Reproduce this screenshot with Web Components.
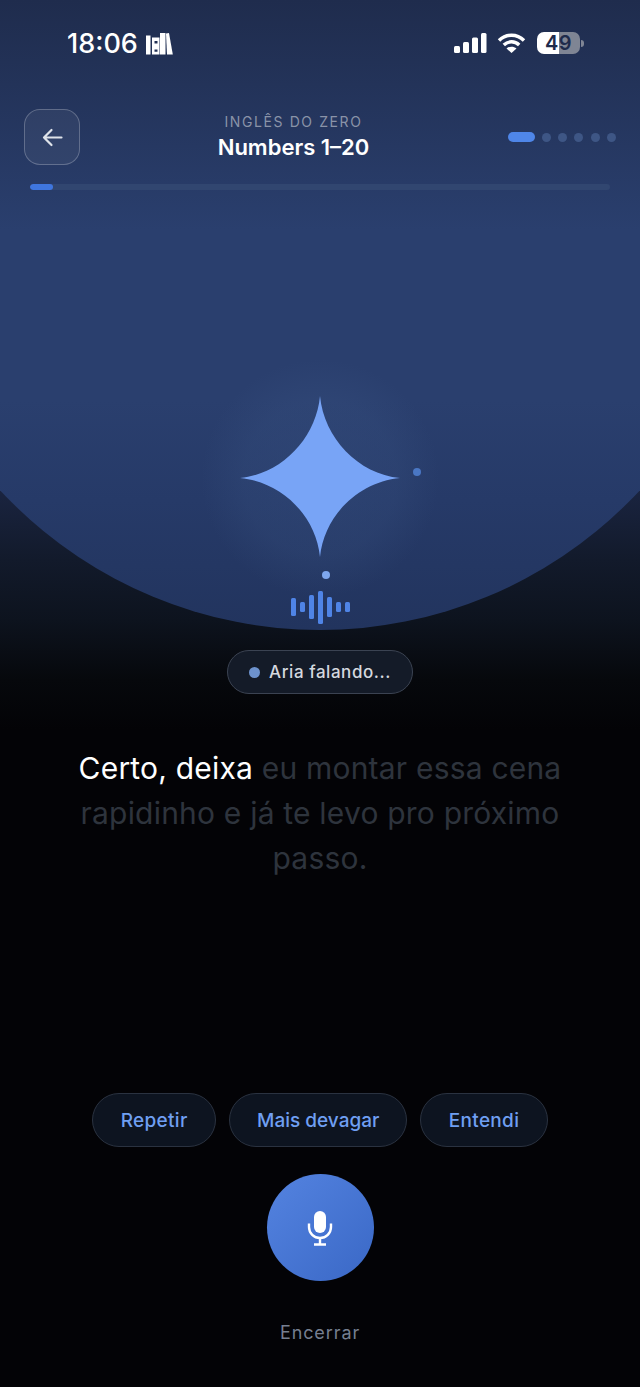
<!DOCTYPE html>
<html lang="pt">
<head>
<meta charset="utf-8">
<title>Aria</title>
<style>
  html, body { margin: 0; padding: 0; background: #030306; }
  body { font-family: "Inter", "Liberation Sans", sans-serif; }
</style>
</head>
<body>
<lesson-screen>
  <status-bar slot="top"></status-bar>
  <lesson-header slot="top" course="INGLÊS DO ZERO" title="Numbers 1–20"></lesson-header>
  <aria-orb slot="orb"></aria-orb>
  <speech-chip slot="orb">Aria falando...</speech-chip>
  <caption-text slot="caption"><b>Certo, deixa</b> eu montar essa cena rapidinho e já te levo pro próximo passo.</caption-text>
  <quick-reply slot="replies" style="letter-spacing:.3px">Repetir</quick-reply>
  <quick-reply slot="replies" style="padding:0 27px">Mais devagar</quick-reply>
  <quick-reply slot="replies" style="letter-spacing:.3px">Entendi</quick-reply>
  <mic-button slot="mic"></mic-button>
  <end-link slot="mic">Encerrar</end-link>
</lesson-screen>

<script>
class LessonScreen extends HTMLElement {
  connectedCallback() {
    this.attachShadow({ mode: 'open' });
    this.shadowRoot.innerHTML = `
      <style>
        :host {
          display: flex;
          flex-direction: column;
          position: relative;
          width: 640px;
          height: 1387px;
          overflow: hidden;
          background: linear-gradient(180deg, #1c2a4b 0, #1c2a4b 430px, #1a2440 490px, #121a2b 560px, #0d131e 620px, #06080c 680px, #030306 730px);
        }
        .dome {
          position: absolute;
          left: 0; top: 0;
          width: 640px;
          height: 640px;
          background: linear-gradient(180deg, #1f2c4d 0, #2a3f6e 230px, #2a3f6e 400px, #263a68 500px, #22345e 630px);
          clip-path: circle(436px at 320px 194px);
        }
        .glow {
          position: absolute;
          left: 200px; top: 358px;
          width: 240px; height: 240px;
          border-radius: 50%;
          background: radial-gradient(circle, rgba(70,100,150,.2) 0, rgba(70,100,150,.15) 45%, rgba(70,100,150,0) 70%);
        }
        .top, .orb, .caption, .replies, .mic { position: relative; }
        .top { display: block; }
        .orb {
          display: flex;
          flex-direction: column;
          align-items: center;
          margin-top: 206px;
        }
        .caption { margin-top: 52px; }
        .replies {
          display: flex;
          justify-content: center;
          gap: 13px;
          margin-top: 212px;
        }
        .mic {
          display: flex;
          flex-direction: column;
          align-items: center;
          margin-top: 27px;
        }
      </style>
      <div class="dome"></div>
      <div class="glow"></div>
      <div class="top"><slot name="top"></slot></div>
      <div class="orb"><slot name="orb"></slot></div>
      <div class="caption"><slot name="caption"></slot></div>
      <div class="replies"><slot name="replies"></slot></div>
      <div class="mic"><slot name="mic"></slot></div>
    `;
  }
}

class StatusBar extends HTMLElement {
  connectedCallback() {
    this.attachShadow({ mode: 'open' });
    this.shadowRoot.innerHTML = `
      <style>
        :host {
          display: flex;
          justify-content: space-between;
          align-items: center;
          height: 86px;
          padding: 0 56px 0 67px;
          box-sizing: border-box;
          color: #fff;
        }
        .left, .right { display: flex; align-items: center; }
        .time { font-size: 27px; font-weight: 500; line-height: 1; }
        .left svg { margin-left: 8px; margin-top: 1px; }
        .right svg { display: block; }
        .batt {
          width: 43px; height: 22px;
          border-radius: 7px;
          margin-left: 11px;
          background: linear-gradient(90deg, #fff 0, #fff 50%, #7f8594 50%);
          color: #1e2b4c;
          font-size: 20px;
          font-weight: 600;
          letter-spacing: .5px;
          line-height: 22px;
          text-align: center;
        }
        .cap { width: 3px; height: 7px; margin-left: 1px; border-radius: 0 3px 3px 0; background: #7f8594; }
      </style>
      <div class="left">
        <span class="time">18:06</span>
        <svg width="28" height="24" viewBox="0 0 28 24" fill="#fff">
          <rect x="0" y="3.500" width="4.500" height="19"/>
          <path fill-rule="evenodd" d="M6 5.500h7.500v17H6zM8.500 9v2.500h3V9zM8.500 17.500v2.200h3v-2.200z"/>
          <rect x="14" y="1" width="5.500" height="21.500"/>
          <path d="M20 1.500L23 1l3.800 21.500H21z"/>
        </svg>
      </div>
      <div class="right">
        <svg width="34" height="22" viewBox="0 0 34 22" fill="#fff">
          <rect x="1" y="14" width="6" height="7" rx="1.500"/>
          <rect x="10" y="10" width="6" height="11" rx="1.500"/>
          <rect x="19" y="5.500" width="6" height="15.500" rx="1.500"/>
          <rect x="28" y="1" width="5.500" height="20" rx="1.500"/>
        </svg>
        <svg width="29" height="22" viewBox="0 0 29 22" style="margin-left:10px" fill="none" stroke="#fff" stroke-width="3.400">
          <path d="M2 8.500c7-7 18-7 25 0"/>
          <path d="M6.800 13c4.300-4.300 11.100-4.300 15.400 0"/>
          <path d="M14.500 21l-5-4.500c2.800-2.500 7.200-2.500 10 0z" fill="#fff" stroke="none"/>
        </svg>
        <div class="batt">49</div>
        <div class="cap"></div>
      </div>
    `;
  }
}

class LessonHeader extends HTMLElement {
  connectedCallback() {
    this.attachShadow({ mode: 'open' });
    this.shadowRoot.innerHTML = `
      <style>
        :host { display: block; position: relative; }
        .row {
          display: grid;
          grid-template-columns: 56px 1fr 109px;
          align-items: center;
          padding: 23px 24px 0;
          height: 56px;
        }
        .back {
          box-sizing: border-box;
          width: 56px; height: 56px;
          border-radius: 16px;
          border: 1px solid rgba(255,255,255,.24);
          background: rgba(255,255,255,.05);
          display: flex; align-items: center; justify-content: center;
        }
        .titles { text-align: center; margin: 0 28px; }
        .course { font-size: 14px; letter-spacing: 1.600px; color: #8a93a8; line-height: 18px; }
        .title { font-size: 22px; font-weight: 600; color: #fff; line-height: 28px; margin-top: 2px; }
        .steps { display: flex; align-items: center; gap: 7.300px; justify-self: end; }
        .steps i { display: block; width: 9px; height: 9px; border-radius: 50%; background: #3e5685; }
        .steps i.on { width: 27px; border-radius: 5px; height: 10px; background: #4f86e8; }
        .track { height: 6px; margin: 19px 30px 0; border-radius: 3px; background: #314670; overflow: hidden; }
        .track div { width: 23px; height: 100%; background: #3f76de; border-radius: 3px; }
      </style>
      <div class="row">
        <div class="back">
          <svg width="21" height="19" viewBox="0 0 21 19" fill="none" stroke="#dfe3ea" stroke-width="2.200" stroke-linecap="round" stroke-linejoin="round">
            <path d="M19.500 9.500H2.500M9.500 2L2 9.500 9.500 17"/>
          </svg>
        </div>
        <div class="titles">
          <div class="course">${this.getAttribute('course')}</div>
          <div class="title">${this.getAttribute('title')}</div>
        </div>
        <div class="steps"><i class="on"></i><i></i><i></i><i></i><i></i><i></i></div>
      </div>
      <div class="track"><div></div></div>
    `;
  }
}

class AriaOrb extends HTMLElement {
  connectedCallback() {
    this.attachShadow({ mode: 'open' });
    this.shadowRoot.innerHTML = `
      <style>
        :host { display: flex; flex-direction: column; align-items: center; position: relative; width: 160px; }
        .star { display: block; }
        .sat { position: absolute; width: 8px; height: 8px; border-radius: 50%; }
        .a { left: 173px; top: 72px; background: #4a77c4; }
        .b { left: 82px; top: 175px; background: #7ea7ee; }
        .wave { display: flex; align-items: center; gap: 4px; height: 34px; margin-top: 33px; }
        .wave i { display: block; width: 5px; border-radius: 1.500px; background: #4f84e6; }
      </style>
      <svg class="star" width="160" height="161" viewBox="0 0 160 161">
        <path fill="#78a4f6" d="M80 0C84 42 118 78 160 82C118 86 84 120 80 161C76 120 42 86 0 82C42 78 76 42 80 0Z"/>
      </svg>
      <span class="sat a"></span>
      <span class="sat b"></span>
      <div class="wave">
        <i style="height:18px"></i><i style="height:10px"></i><i style="height:24px"></i><i style="height:33px"></i><i style="height:20px"></i><i style="height:10px"></i><i style="height:10px"></i>
      </div>
    `;
  }
}

class SpeechChip extends HTMLElement {
  connectedCallback() {
    this.attachShadow({ mode: 'open' });
    this.shadowRoot.innerHTML = `
      <style>
        :host {
          display: inline-flex;
          align-items: center;
          box-sizing: border-box;
          height: 44px;
          margin-top: 26px;
          padding: 0 21px;
          gap: 9px;
          border-radius: 22px;
          border: 1px solid #3b4352;
          background: #141b28;
          color: #d4d8df;
          font-size: 17px;
          font-weight: 500;
          letter-spacing: .55px;
        }
        .dot { width: 11px; height: 11px; border-radius: 50%; background: #6d92cd; }
      </style>
      <span class="dot"></span><slot></slot>
    `;
  }
}

class CaptionText extends HTMLElement {
  connectedCallback() {
    this.attachShadow({ mode: 'open' });
    this.shadowRoot.innerHTML = `
      <style>
        :host {
          display: block;
          padding: 0 70px;
          text-align: center;
          font-size: 30px;
          letter-spacing: .2px;
          line-height: 45px;
          color: #2e343d;
        }
        ::slotted(b) { color: #fff; font-weight: 400; }
      </style>
      <slot></slot>
    `;
  }
}

class QuickReply extends HTMLElement {
  connectedCallback() {
    this.attachShadow({ mode: 'open' });
    this.shadowRoot.innerHTML = `
      <style>
        :host {
          display: inline-flex;
          align-items: center;
          box-sizing: border-box;
          height: 54px;
          padding: 0 27.500px;
          border-radius: 27px;
          border: 1px solid #2a3240;
          background: #0d1420;
          color: #6f9ff2;
          font-size: 19px;
          font-weight: 500;
        }
      </style>
      <slot></slot>
    `;
  }
}

class MicButton extends HTMLElement {
  connectedCallback() {
    this.attachShadow({ mode: 'open' });
    this.shadowRoot.innerHTML = `
      <style>
        :host {
          display: flex;
          align-items: center;
          justify-content: center;
          width: 107px; height: 107px;
          border-radius: 50%;
          background: linear-gradient(135deg, #5483e0 0, #3a68c6 100%);
        }
      </style>
      <svg width="26" height="36" viewBox="0 0 26 36" fill="none" stroke="#fff" stroke-width="2.400">
        <rect x="7" y="1" width="12" height="22" rx="6" fill="#fff" stroke="none"/>
        <path d="M2 13.500v3.500a11 11 0 0 0 22 0v-3.500"/>
        <path d="M13 28v6M7 34.500h12"/>
      </svg>
    `;
  }
}

class EndLink extends HTMLElement {
  connectedCallback() {
    this.attachShadow({ mode: 'open' });
    this.shadowRoot.innerHTML = `
      <style>
        :host {
          display: block;
          margin-top: 40px;
          font-size: 18px;
          letter-spacing: .9px;
          line-height: 24px;
          color: #767f90;
        }
      </style>
      <slot></slot>
    `;
  }
}

customElements.define('lesson-screen', LessonScreen);
customElements.define('status-bar', StatusBar);
customElements.define('lesson-header', LessonHeader);
customElements.define('aria-orb', AriaOrb);
customElements.define('speech-chip', SpeechChip);
customElements.define('caption-text', CaptionText);
customElements.define('quick-reply', QuickReply);
customElements.define('mic-button', MicButton);
customElements.define('end-link', EndLink);
</script>
</body>
</html>
